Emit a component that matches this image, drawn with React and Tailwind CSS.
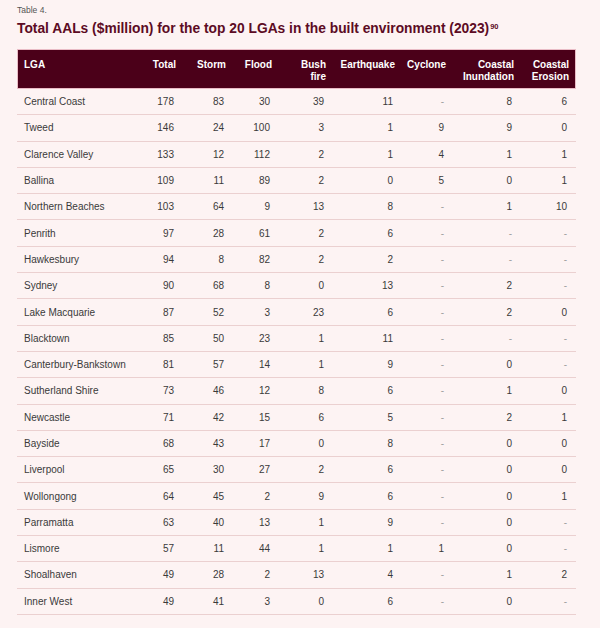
import React from "react";

const rows = [
  ["Central Coast", "178", "83", "30", "39", "11", "-", "8", "6"],
  ["Tweed", "146", "24", "100", "3", "1", "9", "9", "0"],
  ["Clarence Valley", "133", "12", "112", "2", "1", "4", "1", "1"],
  ["Ballina", "109", "11", "89", "2", "0", "5", "0", "1"],
  ["Northern Beaches", "103", "64", "9", "13", "8", "-", "1", "10"],
  ["Penrith", "97", "28", "61", "2", "6", "-", "-", "-"],
  ["Hawkesbury", "94", "8", "82", "2", "2", "-", "-", "-"],
  ["Sydney", "90", "68", "8", "0", "13", "-", "2", "-"],
  ["Lake Macquarie", "87", "52", "3", "23", "6", "-", "2", "0"],
  ["Blacktown", "85", "50", "23", "1", "11", "-", "-", "-"],
  ["Canterbury-Bankstown", "81", "57", "14", "1", "9", "-", "0", "-"],
  ["Sutherland Shire", "73", "46", "12", "8", "6", "-", "1", "0"],
  ["Newcastle", "71", "42", "15", "6", "5", "-", "2", "1"],
  ["Bayside", "68", "43", "17", "0", "8", "-", "0", "0"],
  ["Liverpool", "65", "30", "27", "2", "6", "-", "0", "0"],
  ["Wollongong", "64", "45", "2", "9", "6", "-", "0", "1"],
  ["Parramatta", "63", "40", "13", "1", "9", "-", "0", "-"],
  ["Lismore", "57", "11", "44", "1", "1", "1", "0", "-"],
  ["Shoalhaven", "49", "28", "2", "13", "4", "-", "1", "2"],
  ["Inner West", "49", "41", "3", "0", "6", "-", "0", "-"],
];

// column widths in px, LGA first
const widths = [
  "w-[113px]",
  "w-[53px]",
  "w-[50px]",
  "w-[46px]",
  "w-[54px]",
  "w-[69px]",
  "w-[51px]",
  "w-[68px]",
  "w-[55px]",
];

const headers = [
  ["LGA"],
  ["Total"],
  ["Storm"],
  ["Flood"],
  ["Bush", "fire"],
  ["Earthquake"],
  ["Cyclone"],
  ["Coastal", "Inundation"],
  ["Coastal", "Erosion"],
];

export default function App() {
  return (
    <div className="w-[600px] h-[628px] bg-[#fdf3f3] px-[17px] pt-[4px] font-['Liberation_Sans',Arial,sans-serif] overflow-hidden">
      <p className="text-[8.5px] leading-[12px] text-[#555]">Table 4.</p>
      <h2 className="mt-[3px] text-[13.8px] leading-[20px] font-bold text-[#5c0b24]">
        Total AALs ($million) for the top 20 LGAs in the built environment (2023)
        <sup className="text-[7.5px] font-bold ml-[1px]">90</sup>
      </h2>

      <div className="mt-[10px] w-[559px]">
        <div className="flex h-[40px] bg-[#4b0019] border border-[#e9bcc6] text-white text-[10px] font-bold leading-[12px]">
          {headers.map((h, i) => (
            <div
              key={i}
              className={`${widths[i]} shrink-0 pt-[9px] ${
                i === 0 ? "pl-[6px] text-left" : "pr-[8px] text-right"
              }`}
            >
              {h.map((line) => (
                <div key={line}>{line}</div>
              ))}
            </div>
          ))}
        </div>

        {rows.map((r) => (
          <div
            key={r[0]}
            className="flex h-[26.3px] items-center border-b border-[#ebd0d0] text-[10px] text-[#3a3a3a]"
          >
            {r.map((c, i) => (
              <div
                key={i}
                className={`${widths[i]} shrink-0 ${
                  i === 0 ? "pl-[7px] text-left" : "pr-[9px] text-right"
                } ${c === "-" ? "text-[#a0a0a0]" : ""}`}
              >
                {c}
              </div>
            ))}
          </div>
        ))}
      </div>
    </div>
  );
}
